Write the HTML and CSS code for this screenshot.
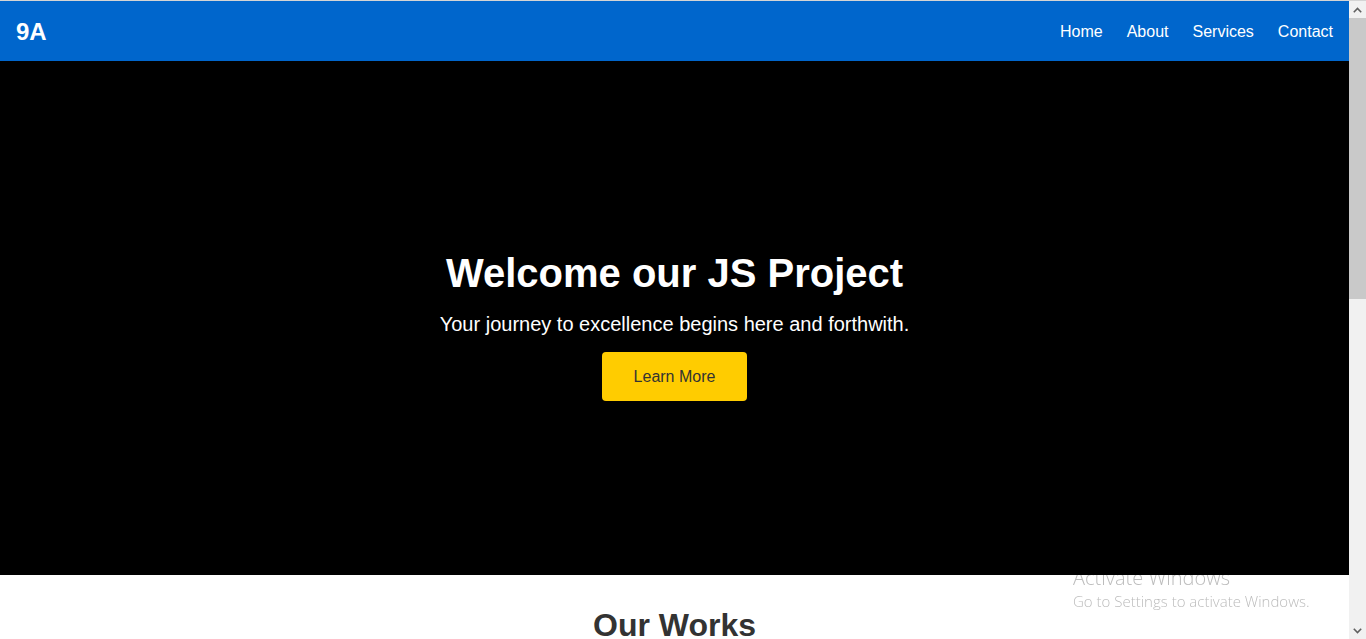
FILE: index.html
```html
<!DOCTYPE html>
<html lang="en">
<head>
<meta charset="utf-8">
<title>9A - JS Project</title>
<link rel="stylesheet" href="styles.css">
</head>
<body>
<div class="window">
  <div class="page">
    <header class="navbar">
      <div class="brand">9A</div>
      <nav class="nav-links">
        <a href="#" class="nav-link">Home</a>
        <a href="#" class="nav-link">About</a>
        <a href="#" class="nav-link">Services</a>
        <a href="#" class="nav-link">Contact</a>
      </nav>
    </header>
    <section class="hero">
      <h1 class="hero-title">Welcome our JS Project</h1>
      <p class="hero-text">Your journey to excellence begins here and forthwith.</p>
      <a href="#" class="hero-btn">Learn More</a>
    </section>
    <section class="works">
      <h2 class="works-title">Our Works</h2>
      <div class="works-grid">
        <div class="work-card"><h3>Project One</h3><p>A dynamic web application built with vanilla JavaScript.</p></div>
        <div class="work-card"><h3>Project Two</h3><p>An interactive dashboard with real-time data.</p></div>
        <div class="work-card"><h3>Project Three</h3><p>A responsive landing page with smooth animations.</p></div>
      </div>
    </section>
  </div>
  <div class="scrollbar">
    <div class="sb-btn">
      <svg width="9" height="6" viewBox="0 0 9 6"><path d="M0.8 5.2 L4.5 1.5 L8.2 5.2" fill="none" stroke="#606060" stroke-width="1.6"/></svg>
    </div>
    <div class="sb-thumb"></div>
    <div class="sb-track"></div>
    <div class="sb-btn">
      <svg width="9" height="6" viewBox="0 0 9 6"><path d="M0.8 0.8 L4.5 4.5 L8.2 0.8" fill="none" stroke="#606060" stroke-width="1.6"/></svg>
    </div>
  </div>
</div>
<div class="watermark">
  <div class="wm-title">Activate Windows</div>
  <div class="wm-sub">Go to Settings to activate Windows.</div>
</div>
</body>
</html>
```
FILE: styles.css
```css
html, body {
  height: 100%;
}
body {
  margin: 0;
  border-top: 1px solid #d4d4d4;
  box-sizing: border-box;
  font-family: "Liberation Sans", Arial, sans-serif;
  color: #333;
  background: #fff;
  overflow: hidden;
}
.window {
  display: flex;
  height: 638px;
}
.page {
  flex: 1;
  min-width: 0;
  overflow: hidden;
}
.scrollbar {
  width: 17px;
  flex: none;
  display: flex;
  flex-direction: column;
  background: #f1f1f1;
}
.sb-btn {
  height: 17px;
  flex: none;
  display: flex;
  align-items: center;
  justify-content: center;
}
.sb-thumb {
  height: 281px;
  flex: none;
  background: #c9c9c9;
}
.sb-track {
  flex: 1;
}
.navbar {
  height: 60px;
  box-sizing: border-box;
  padding: 2px 16px 0;
  background: #0066cc;
  display: flex;
  align-items: center;
  justify-content: space-between;
}
.brand {
  color: #fff;
  font-size: 24px;
  font-weight: bold;
}
.nav-links {
  display: flex;
  gap: 24px;
}
.nav-link {
  color: #fff;
  text-decoration: none;
  font-size: 16px;
}
.hero {
  height: 514px;
  box-sizing: border-box;
  background: #000;
  color: #fff;
  display: flex;
  flex-direction: column;
  align-items: center;
  padding-top: 190px;
}
.hero-title {
  font-size: 40px;
  margin: 0 0 17px;
}
.hero-text {
  font-size: 20px;
  margin: 0 0 16px;
}
.hero-btn {
  display: inline-block;
  background: #ffcc00;
  color: #333;
  text-decoration: none;
  font-size: 16px;
  line-height: 19px;
  padding: 15px 32px;
  border-radius: 4px;
}
.works {
  padding: 32px 20px 60px;
  text-align: center;
}
.works-title {
  font-size: 32px;
  margin: 0 0 40px;
  color: #333;
}
.works-grid {
  display: flex;
  gap: 24px;
  justify-content: center;
}
.work-card {
  width: 300px;
  height: 360px;
  background: #f4f4f4;
  border-radius: 6px;
  padding: 20px;
  box-sizing: border-box;
}
.watermark {
  position: fixed;
  left: 1073px;
  top: 565px;
  font-family: "Open Sans", "Noto Sans", sans-serif;
  color: #bcbcbc;
  mix-blend-mode: multiply;
  pointer-events: none;
}
.wm-title {
  font-size: 20px;
  font-weight: 300;
  line-height: 26px;
}
.wm-sub {
  font-size: 15px;
  font-weight: 300;
  line-height: 20px;
  margin-top: 0;
}
```
